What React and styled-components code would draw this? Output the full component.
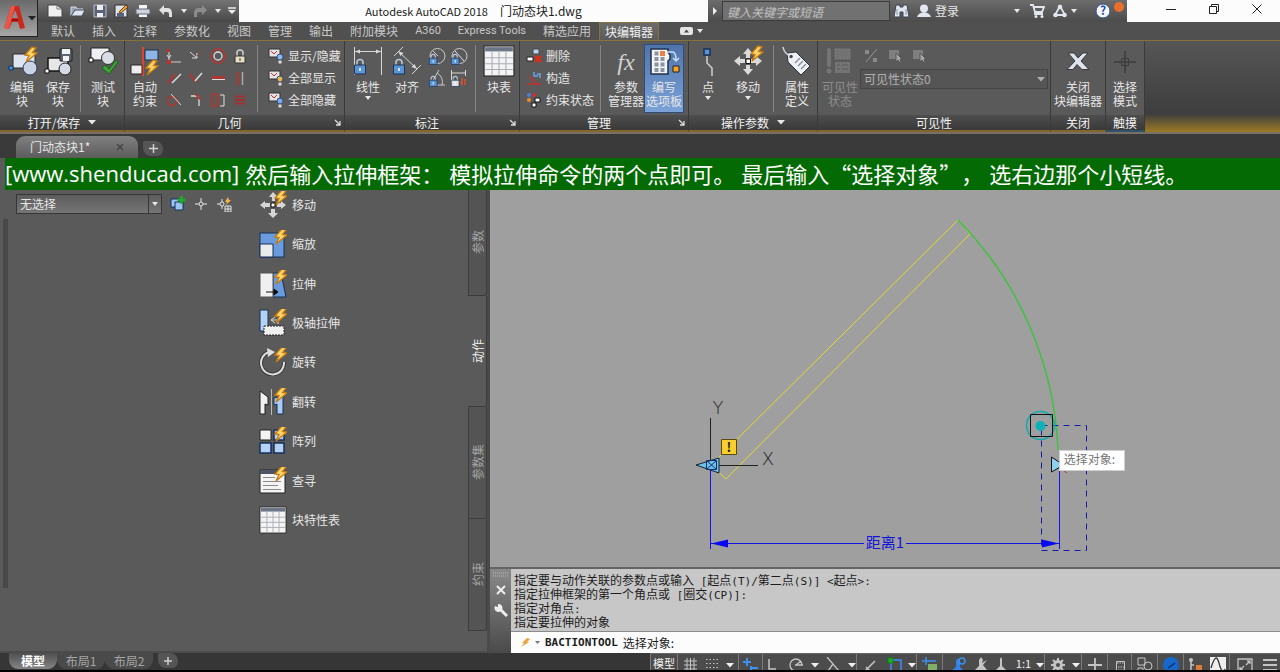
import React, { useState } from "react";
import styled, { createGlobalStyle, css } from "styled-components";

const GlobalStyle = createGlobalStyle`
  * {
    box-sizing: border-box;
  }
  body {
    margin: 0;
    background: #000;
    color: #e6e6e6;
    font-family: "Noto Sans CJK SC", "Noto Sans", sans-serif;
    font-size: 12px;
    line-height: 14px;
  }
  button, input, select {
    font: inherit;
    color: inherit;
    margin: 0;
    padding: 0;
    border: 0;
    background: none;
    border-radius: 0;
  }
  svg {
    display: block;
    flex: none;
  }
`;

/* ---------- icons ---------- */

const Icon = ({ w = 32, h = w, children }) => (
  <svg width={w} height={h} viewBox={`0 0 ${w} ${h}`} fill="none" aria-hidden="true">
    {children}
  </svg>
);

const Bolt = ({ x = 0, y = 0 }) => (
  <path
    transform={`translate(${x} ${y})`}
    d="M8 0 L1 8 L5 8.5 L2 15 L13 6 L8.5 5.5 L12 1 Z"
    fill="#ffd56a"
    stroke="#c47a12"
    strokeWidth="1.3"
  />
);

const Arrow = () => (
  <Icon w={8} h={5}>
    <path d="M0 0h8L4 4.5z" fill="#e8e8e8" />
  </Icon>
);

const TinyArrow = () => (
  <Icon w={6} h={4}>
    <path d="M0 0h6L3 4z" fill="#e8e8e8" />
  </Icon>
);

const EditBlockIcon = () => (
  <Icon>
    <path d="M7 9h22v14H7z" fill="#dfe5f0" stroke="#2b2b2b" />
    <circle cx="24" cy="23" r="7" fill="#c9d3e6" stroke="#2f3a52" />
    <path d="M3 21h4v4H3z" fill="#4a90d9" stroke="#12335c" />
    <Bolt x={18} y={2} />
  </Icon>
);

const SaveBlockIcon = () => (
  <Icon>
    <path d="M6 13h20v13H6z" fill="#e6e6e6" stroke="#151515" strokeWidth="1.5" />
    <circle cx="23" cy="24" r="6" fill="#d5dae4" stroke="#222" />
    <path d="M18 4h12v12H18z" fill="#5c6470" stroke="#222" />
    <path d="M20 4h8v5h-8zM21 11h6v5h-6z" fill="#f2f2f2" />
    <path d="M3 24h4v4H3z" fill="#fff" stroke="#111" />
  </Icon>
);

const TestBlockIcon = () => (
  <Icon>
    <path d="M4 3h18v12H4z" fill="#eef0f4" stroke="#222" />
    <circle cx="21" cy="13" r="6.5" fill="#d8dce4" stroke="#333" />
    <path d="M2 13h4v4H2z" fill="#fff" stroke="#111" />
    <path d="M15 23l3-3 4 4 7-9 2 2-9 12z" fill="#3fa33a" stroke="#1b5f1b" />
  </Icon>
);

const AutoConstrainIcon = () => (
  <Icon>
    <path d="M14 2v29" stroke="#e0442c" strokeWidth="2" />
    <path d="M16 5h13v10H16z" fill="#8fb4e6" stroke="#1d2f4c" />
    <path d="M2 20h11v9H2z" fill="#eeeeee" stroke="#222" />
    <Bolt x={16} y={15} />
  </Icon>
);

const Lock = ({ x, y, s = 1, fill = "#5a93d6" }) => (
  <g transform={`translate(${x} ${y}) scale(${s})`}>
    <path d="M3 6V3.5a3 3 0 0 1 6 0V6" stroke="#b8c6da" strokeWidth="1.6" />
    <path d="M0.5 6h11v9H0.5z" fill={fill} stroke="#1d3557" />
    <path d="M6 9v3" stroke="#fff" strokeWidth="1.5" />
  </g>
);

const LinearIcon = () => (
  <Icon>
    <path d="M2.5 2v28M29.5 2v28M3 6.5h26" stroke="#d6d6d6" />
    <path d="M3 6.5l5-2v4zM29 6.5l-5-2v4z" fill="#d6d6d6" />
    <Lock x={2} y={14} />
  </Icon>
);

const AlignedIcon = () => (
  <Icon>
    <path d="M3 11l9-9M21 29l9-9M7 6l19 18" stroke="#d6d6d6" />
    <path d="M7 6l5.5 2-3 3zM26 24l-5.5-2 3-3z" fill="#d6d6d6" />
    <Lock x={2} y={14} />
  </Icon>
);

const SmallDim = ({ kind }) => (
  <Icon w={18}>
    {kind === "radius" && (
      <>
        <circle cx="9.5" cy="9" r="7.5" stroke="#c9c9c9" />
        <path d="M10 9L5 4" stroke="#c9c9c9" />
      </>
    )}
    {kind === "diameter" && (
      <>
        <circle cx="9.5" cy="9" r="7.5" stroke="#c9c9c9" />
        <path d="M5 4l9 10" stroke="#e4e4e4" />
      </>
    )}
    {kind === "angle" && <path d="M3 15L11 1M3 16h14M9 4a10 10 0 0 1 5 12" stroke="#c9c9c9" />}
    {kind === "convert" && (
      <>
        <path d="M1.5 1v14M15.5 1v6M2 4h13" stroke="#d6d6d6" />
        <path d="M12 9v6l-2-2M15 16v-6" stroke="#d9502c" strokeWidth="1.5" />
      </>
    )}
    <Lock x={1} y={7} s={0.7} fill={kind === "convert" ? "#e0e0e0" : "#5a93d6"} />
  </Icon>
);

const TableIcon = ({ w = 30 }) => (
  <svg width={w} height={w} viewBox="0 0 30 30" fill="none" aria-hidden="true">
    <path d="M1 1h28v28H1z" fill="#f4f4f4" stroke="#222" />
    <path d="M2 2h26v4H2z" fill="#6d7686" />
    <path d="M2 12h26M2 17.5h26M2 23h26M8.5 6v22M15 6v22M21.5 6v22" stroke="#a9adb5" />
  </svg>
);

const PaletteIcon = () => (
  <Icon>
    <path d="M3 4h17v3l2 3v4l-2 2v13H3z" fill="#f4f4f4" stroke="#20304d" strokeWidth="1.5" />
    {[0, 1, 2, 3].map((r) =>
      [0, 1].map((c) => (
        <path key={`${r}${c}`} d={`M${6.5 + c * 6} ${6.5 + r * 5.5}h4v4h-4z`} fill="#8a93a3" />
      ))
    )}
    <path d="M12 6h5v5h-5z" fill="#e8824a" />
    <path d="M19 7h6q3 1 3 8M25 13l3 3 3-3" stroke="#c9dcf7" strokeWidth="1.5" />
    <path d="M25 21h6v6h-6z" fill="#f5a623" stroke="#222" />
  </Icon>
);

const PointIcon = () => (
  <Icon>
    <path d="M12 4h6v6h-6z" fill="#5a93d6" stroke="#16325a" strokeWidth="1.5" />
    <path d="M15 11v7l5 5v8" stroke="#d0d0d0" strokeWidth="1.5" />
  </Icon>
);

const MoveIcon = () => (
  <Icon>
    <path d="M16 3l-5 6h3v4h4V9h3zM16 30l-5-6h3v-4h4v4h3zM2 16l6-5v3h5v4H8v3zM30 16l-6-5v3h-5v4h5v3z" fill="#dadada" />
    <path d="M14 14h4.5v4.5H14z" fill="#fff" stroke="#111" />
    <Bolt x={18} y={1} />
  </Icon>
);

const TagIcon = () => (
  <Icon>
    <path d="M6 8l9-1 14 14-9 9L7 17z" fill="#eef0f4" stroke="#2c3140" />
    <circle cx="10" cy="11.5" r="1.8" fill="#444" />
    <path d="M9 11Q3 8 2 2" stroke="#d6d6d6" strokeWidth="1.5" />
    <path d="M14 18l5-5M17 21l5-5M20 24l5-5" stroke="#8a90a0" strokeWidth="1.5" />
  </Icon>
);

const VisibilityIcon = () => (
  <Icon>
    <path d="M5 5v15" stroke="#a5a5a5" strokeWidth="4" strokeLinecap="round" />
    <circle cx="5" cy="26" r="2.5" fill="#a5a5a5" />
    <path d="M11 4h15v10H11z" fill="#a0a0a0" stroke="#c4c4c4" strokeDasharray="2 1" />
    <path d="M11 17h15v11H11z" fill="#a5a5a5" />
    <path d="M13 20h3M18 20h6M13 24h3M18 24h6" stroke="#5a5a5a" />
  </Icon>
);

const CloseIcon = () => (
  <Icon>
    <path d="M6 8h6l4 5 5-5h5l-7 8 8 8.5h-7l-5-5-4 5H5l8-8.500z" fill="#dfe3ea" stroke="#33383f" />
  </Icon>
);

const TouchIcon = () => (
  <Icon>
    <path d="M16 6v22M5 17h22" stroke="#3c3c3c" strokeWidth="1.5" />
    <path d="M12.5 13.5h7v7h-7z" stroke="#3c3c3c" />
  </Icon>
);

const geoPaths = [
  <><path d="M3 1v12" stroke="#ddd" /><path d="M1 7l2 3 2-3" stroke="#ddd" /><path d="M4 14h11" stroke="#ccc" /><path d="M1 1h3v3H1zM1 12h4v4H1z" fill="#b8322c" /></>,
  <><path d="M2 4l7 6M9 5v5H4" stroke="#ddd" /><path d="M9 8l6-7" stroke="#a33" strokeDasharray="2 1" /></>,
  <><circle cx="8" cy="8" r="7" stroke="#b8322c" strokeWidth="1.5" /><circle cx="8" cy="8" r="4" stroke="#ddd" strokeWidth="1.3" /></>,
  <><path d="M5 8V5a3 3 0 0 1 6 0v3" stroke="#cfcfcf" strokeWidth="1.5" /><path d="M3 8h10v7H3z" fill="#e6dfc5" stroke="#333" /><path d="M8 10v3" stroke="#333" /></>,
  <><path d="M2 13L9 4" stroke="#b8322c" strokeWidth="2" /><path d="M6 13l9-9" stroke="#ddd" strokeWidth="1.5" /></>,
  <><path d="M2 4l6 8" stroke="#b8322c" strokeWidth="2" /><path d="M7 11l7-8" stroke="#ddd" strokeWidth="1.5" /></>,
  <><path d="M2 7.5h13" stroke="#b8322c" strokeWidth="2.5" /><path d="M2 9.5h13" stroke="#ddd" /></>,
  <><path d="M6 2v13" stroke="#b8322c" strokeWidth="2" /><path d="M10.5 2v13" stroke="#aaa" strokeWidth="1.5" /></>,
  <><circle cx="6" cy="9" r="4.5" stroke="#b8322c" strokeWidth="1.5" /><path d="M5 2l10 11" stroke="#ddd" /></>,
  <><path d="M3 4h5q3 0 3 4v6" stroke="#ddd" strokeWidth="1.3" /><path d="M7 2l6 6M10 3v4" stroke="#b8322c" strokeWidth="1.5" /></>,
  <><path d="M2 2h4M2 2v12h4M8 1v14" stroke="#b8322c" strokeWidth="1.5" /><path d="M10 3h4v11h-4" stroke="#ddd" /></>,
  <><path d="M3 4.5h10M3 8h10M3 11.5h10" stroke="#a3302c" strokeWidth="2" /></>,
];

const ShowIcon = ({ tone }) => (
  <Icon w={16}>
    <path d="M1 1h11v8H1z" fill="#e4e4e4" stroke="#333" />
    <path d="M3 3l3 3M9 3L6 6" stroke="#c8322c" />
    <circle cx="12" cy="9" r="3" fill={tone} stroke="#33507a" />
    <path d="M10.5 12.5h3v3h-3z" fill="#ddd" />
  </Icon>
);

const DeleteIcon = () => (
  <Icon w={16}>
    <path d="M7 1h6v5H7z" fill="#bcd2f0" stroke="#444" />
    <path d="M1 9h6v4H1z" fill="#fff" stroke="#222" />
    <path d="M9 8l6 6M15 8l-6 6" stroke="#e02a18" strokeWidth="2.5" />
  </Icon>
);
const ConstructIcon = () => (
  <Icon w={16}>
    <path d="M1 14h14M3 6l8 8" stroke="#c8322c" strokeWidth="1.3" />
    <path d="M8 2v4h4M14 8V4h-3" stroke="#6fa2e8" strokeWidth="1.5" />
  </Icon>
);
const StatusIcon = () => (
  <Icon w={16}>
    <circle cx="3" cy="3" r="2" fill="#4a7fe0" />
    <circle cx="8" cy="3" r="2" fill="#d3302c" />
    <circle cx="3" cy="8" r="2" fill="#f08a24" />
    <path d="M9 6h5v4H9zM6 11h4v4H6z" fill="#fff" stroke="#111" />
  </Icon>
);

const ToolSvg = ({ kind }) => (
  <Icon w={28}>
    {kind === "move" && (
      <>
        <path d="M14 1l-4 5h3v4h3V6h3zM14 27l-5-5h3v-4h4v4h3zM1 14l5-4v2h5v4H6v2zM27 14l-5-4v2h-4v4h4v2z" fill="#d6d6d6" />
        <path d="M12 12h4v4h-4z" fill="#fff" stroke="#111" />
      </>
    )}
    {kind === "scale" && (
      <>
        <path d="M1 3h24v24H1z" fill="#6a9bdc" stroke="#14305c" />
        <path d="M1 14h13v13H1z" fill="#ececec" stroke="#14305c" />
      </>
    )}
    {kind === "stretch" && (
      <>
        <path d="M14 3h8l5 24H14z" fill="#6a9bdc" stroke="#14305c" />
        <path d="M1 3h13v24H1z" fill="#f0f0f0" stroke="#555" />
        <path d="M7 22h11M15 19l4 3-4 3z" stroke="#111" fill="#111" />
      </>
    )}
    {kind === "polar" && (
      <>
        <path d="M1 1h8v21H1z" fill="#b5d1f5" stroke="#14305c" />
        <path d="M5 17h20v9H5z" fill="#f0f0f0" stroke="#222" strokeDasharray="2 1" />
        <path d="M12 11l4-3M12 11l4 3M13 11h6v4" stroke="#d8d8d8" />
      </>
    )}
    {kind === "rotate" && (
      <>
        <path d="M10 4A11.5 11.5 0 1 0 25 14" stroke="#3a3a3a" strokeWidth="4" />
        <path d="M10 4A11.5 11.5 0 1 0 25 14" stroke="#dedede" strokeWidth="2" />
        <path d="M8 0l8 4-7 5z" fill="#dedede" />
      </>
    )}
    {kind === "flip" && (
      <>
        <path d="M1 3l8 6v8l-3-1v10H1z" fill="#f0f0f0" stroke="#222" />
        <path d="M12.5 1v26" stroke="#bbb" />
        <path d="M24 8l-9 2v7l3-1v10h6z" fill="#a9cbf5" stroke="#14305c" />
      </>
    )}
    {kind === "array" && (
      <>
        <path d="M1 3h11v10H1z" fill="#f4f4f4" stroke="#222" />
        <path d="M15 3h10v10H15zM1 16h11v10H1zM15 16h10v10H15z" fill="#b5d1f5" stroke="#14305c" strokeWidth="1.5" />
      </>
    )}
    {kind === "lookup" && (
      <>
        <path d="M1 3h25v23H1z" fill="#f4f4f4" stroke="#222" />
        <path d="M1 3h25v4H1z" fill="#4d5562" />
        <path d="M4 10.5h12M4 14.5h18M4 18.5h15M4 22.5h18" stroke="#8b8b8b" />
      </>
    )}
    <Bolt x={15} y={-1} />
  </Icon>
);

/* ---------- title bar ---------- */

const Page = styled.div`
  min-height: 100vh;
  display: flex;
  flex-direction: column;
  overflow: hidden;
  padding-bottom: 2px;
`;

const Header = styled.header`
  display: grid;
  grid-template-columns: 38px 1fr;
  background: #505050;
`;

const AppButton = styled.button`
  display: flex;
  align-items: center;
  gap: 2px;
  height: 37px;
  padding-left: 4px;
  border-right: 1px solid #222;
  border-bottom: 1px solid #222;
  background: linear-gradient(#6a6a6a, #a6a6a6);
`;

const TitleRow = styled.div`
  display: flex;
  height: 22px;
`;

const QuickAccess = styled.div`
  display: flex;
  align-items: center;
  gap: 7px;
  width: 201px;
  padding-left: 9px;
  background: linear-gradient(#747474, #474747);
`;

const Title = styled.h1`
  flex: 1;
  display: flex;
  align-items: center;
  justify-content: center;
  gap: 12px;
  margin: 0;
  font-size: 12px;
  font-weight: 400;
  color: #222;
  background: #fcfcfc;
`;

const AppName = styled.span`
  font-size: 11px;
`;

const InfoCenter = styled.div`
  display: flex;
  align-items: center;
  flex: none;
  width: 419px;
  background: linear-gradient(#6c6c6c, #4c4c4c);
`;

const Search = styled.input`
  width: 168px;
  height: 20px;
  padding: 0 4px;
  background: #717171;
  border: 1px solid #3c3c3c;
  font-style: italic;
  &::placeholder {
    color: #c2c2c2;
    opacity: 1;
  }
`;

const ExpandButton = styled.button`
  width: 14px;
  padding-left: 5px;
`;

const InfoButton = styled.button`
  display: flex;
  align-items: center;
  flex: none;
  gap: 4px;
  margin-left: ${(p) => p.$gap || 0}px;
  white-space: nowrap;
`;

const WindowButtons = styled.div`
  display: flex;
  justify-content: space-around;
  align-items: center;
  flex: none;
  width: 153px;
  padding: 0 2px 4px 22px;
  background: #fcfcfc;
`;

const MenuRow = styled.nav`
  display: flex;
  height: 18px;
  align-items: stretch;
  padding-left: 4px;
`;

const MenuTab = styled.button`
  padding: 0 8px 0 9px;
  white-space: nowrap;
  color: #c8c8c8;
  ${(p) => p.$latin && css`font-family: Roboto, sans-serif; font-size: 11px;`}
  ${(p) =>
    p.$active &&
    css`
      padding: 0 5px;
      color: #f0f0f0;
      background: linear-gradient(#6b6b6b, #5b5b5b);
      border: 1px solid #857339;
      border-bottom: 0;
    `}
`;

/* ---------- ribbon ---------- */

const Ribbon = styled.section`
  display: flex;
  height: 94px;
  border-top: 1px solid #857339;
  border-bottom: 2px solid #777067;
  background: linear-gradient(#565656, #3e3e3e 80%, #9b7a24);
`;

const Panel = styled.div`
  display: flex;
  flex-direction: column;
  flex: none;
  width: ${(p) => p.$width}px;
  border-right: 1px solid #3a3a3a;
  border-bottom: 2px solid ${(p) => p.$line || "#85662a"};
  background: #5a5a5a;
`;

const PanelBody = styled.div`
  flex: 1;
  display: flex;
  align-items: flex-start;
  padding: 4px 0 0 ${(p) => p.$left || 0}px;
`;

const PanelFooter = styled.div`
  display: flex;
  align-items: center;
  height: 15px;
  background: linear-gradient(#4e4e4e, #393939);
  span {
    flex: 1;
    display: flex;
    align-items: center;
    justify-content: center;
    gap: 8px;
    color: #f2f2f2;
  }
`;

const BigButton = styled.button`
  display: flex;
  flex-direction: column;
  align-items: center;
  flex: none;
  width: ${(p) => p.$width || 36}px;
  height: 67px;
  font-family: "Liberation Sans", "Noto Sans CJK SC", sans-serif;
  white-space: nowrap;
  opacity: ${(p) => (p.$off ? 0.35 : 1)};
  ${(p) =>
    p.$on &&
    css`
      background: linear-gradient(#4f74ab, #7ba3d8);
      outline: 1px solid #2f4c7d;
    `}
  svg {
    margin-bottom: 4px;
  }
  span + svg {
    margin-top: 1px;
  }
`;

const Divider = styled.div`
  width: 1px;
  height: 67px;
  margin: 0 ${(p) => p.$m || 4}px;
  background: #858585;
`;

const IconGrid = styled.div`
  display: grid;
  grid-template-columns: repeat(${(p) => p.$cols}, 22px);
  grid-auto-rows: 22px;
  button {
    display: grid;
    place-items: center;
  }
`;

const List = styled.div`
  display: grid;
  grid-auto-rows: 22px;
  justify-items: start;
  padding-left: ${(p) => p.$left || 5}px;
`;

const ListButton = styled.button`
  display: flex;
  align-items: center;
  gap: 4px;
  white-space: nowrap;
`;

const Fx = styled.i`
  height: 36px;
  font: italic 24px/34px "Liberation Serif", serif;
  color: #d2d2d2;
`;

const VisibilityTools = styled.div`
  flex: 1;
  padding-right: 2px;
  opacity: 0.6;
  div {
    display: flex;
    gap: 8px;
    height: 24px;
    padding: 3px 0 0 3px;
  }
`;

const SelectBox = styled.span`
  display: grid;
  align-items: center;
  height: 20px;
  width: ${(p) => p.$width || "auto"};
  border: 1px solid #373737;
  background: ${(p) => (p.$flat ? "#525252" : "linear-gradient(#5c5c5c, #757575)")};
  select {
    grid-area: 1 / 1;
    width: 100%;
    height: 18px;
    padding: 0 3px;
    appearance: none;
    outline: none;
  }
  i {
    grid-area: 1 / 1;
    justify-self: end;
    display: grid;
    place-items: center;
    width: 13px;
    height: 18px;
    pointer-events: none;
    border-left: 1px solid ${(p) => (p.$flat ? "transparent" : "#373737")};
  }
`;

/* ---------- file tabs and caption ---------- */

const FileTabs = styled.div`
  display: flex;
  align-items: flex-end;
  height: 24px;
  padding-left: 16px;
  background: #3a3a3a;
`;

const FileTab = styled.div`
  display: flex;
  align-items: center;
  justify-content: space-between;
  width: 122px;
  height: 22px;
  padding: 0 14px;
  border-radius: 9px 9px 0 0;
  background: linear-gradient(#808080, #5c5c5c);
`;

const NewTab = styled.button`
  display: grid;
  place-items: center;
  width: 20px;
  height: 15px;
  margin: 0 0 2px 5px;
  border-radius: 2px 8px 6px 8px;
  background: #555;
`;

const CaptionStrip = styled.div`
  padding-left: 5px;
  background: #5a5a5a;
`;

const Caption = styled.p`
  display: flex;
  gap: 6px;
  margin: 0;
  height: 32px;
  background: #046b04;
  color: #fff;
  font: 22px/31px "Noto Sans CJK SC", sans-serif;
  text-spacing-trim: space-all;
  white-space: nowrap;
`;

const Site = styled.span`
  font-family: "Open Sans", sans-serif;
`;

/* ---------- workspace ---------- */

const Workspace = styled.main`
  flex: 1;
  display: grid;
  grid-template-columns: 490px 1fr;
  background: #5a5a5a;
`;

const Palettes = styled.aside`
  display: grid;
  grid-template-columns: 248px 1fr 22px;
  border-bottom: 2px solid #4b4b4b;
`;

const Properties = styled.div`
  display: flex;
  flex-direction: column;
`;

const SelectionRow = styled.div`
  display: flex;
  align-items: center;
  gap: 8px;
  padding: 4px 0 0 16px;
`;

const SideBar = styled.div`
  width: 5px;
  height: 369px;
  margin: 5px 0 0 3px;
  background: #484848;
`;

const ToolList = styled.div`
  display: grid;
  grid-auto-rows: 1fr;
  height: 355px;
  margin-top: -5px;
  padding-left: 11px;
  justify-items: start;
`;

const ToolButton = styled.button`
  display: flex;
  align-items: center;
  gap: 5px;
`;

const SideTabs = styled.div`
  display: flex;
  flex-direction: column;
  border-right: 3px solid #4a4a4a;
`;

const SideTab = styled.button`
  height: ${(p) => p.$height}px;
  display: grid;
  place-items: center;
  border: 1px solid #3c3c3c;
  border-top: 0;
  border-radius: 0 0 3px 0;
  color: #a2a2a2;
  background: #545454;
  ${(p) =>
    p.$active &&
    css`
      color: #f0f0f0;
      background: #5a5a5a;
      border-left-color: transparent;
    `}
  span {
    writing-mode: vertical-rl;
    text-orientation: sideways;
    transform: rotate(180deg);
  }
`;

const Right = styled.div`
  display: flex;
  flex-direction: column;
`;

const Canvas = styled.div`
  position: relative;
  background: #9f9f9f;
  border-bottom: 2px solid #646464;
  svg {
    width: 100%;
    height: auto;
  }
`;

const Tooltip = styled.div`
  position: absolute;
  left: 72%;
  top: 69%;
  width: 66px;
  height: 21px;
  padding: 1px 4px;
  background: #fff;
  border: 1px solid #d0d0d0;
  color: #777;
`;

const CommandWindow = styled.div`
  flex: 1;
  display: grid;
  grid-template-columns: 21px 1fr;
`;

const CommandHandle = styled.div`
  display: flex;
  flex-direction: column;
  align-items: center;
  gap: 8px;
  padding-top: 3px;
  background: linear-gradient(#8a8a8a, #4a4a4a);
`;

const History = styled.div`
  height: 62px;
  padding: 4px 0 0 3px;
  background: #c7c7c7;
  color: #1c1c1c;
  overflow: hidden;
`;

const Line = styled.div`
  height: 14px;
  white-space: pre;
`;

const Mono = styled.span`
  font-family: "DejaVu Sans Mono", monospace;
  font-size: 11px;
  line-height: 12px;
`;

const Prompt = styled.label`
  display: flex;
  align-items: center;
  gap: 5px;
  height: 22px;
  padding-left: 10px;
  border-top: 1px solid #8a8a8a;
  background: #fcfcfc;
  color: #1c1c1c;
  ${Mono} {
    font-weight: 700;
  }
  input {
    flex: 1;
    outline: none;
  }
`;

/* ---------- bottom bar ---------- */

const BottomBar = styled.footer`
  display: flex;
  height: 17px;
  overflow: hidden;
  background: #363636;
`;

const LayoutTabs = styled.div`
  flex: 1;
  display: flex;
  padding-left: 9px;
`;

const LayoutTab = styled.button`
  width: 48px;
  height: 16px;
  border-radius: 0 0 9px 9px;
  background: ${(p) => (p.$active ? "linear-gradient(#4f4f4f, #858585)" : "#4a4a4a")};
  color: ${(p) => (p.$active ? "#fff" : "#a6a6a6")};
  font-weight: ${(p) => (p.$active ? 700 : 400)};
`;

const StatusTray = styled.div`
  display: flex;
  background: #4c4c4c;
  border-top: 1px solid #666;
`;

const StatusCell = styled.button`
  display: flex;
  justify-content: center;
  width: ${(p) => p.$width}px;
  padding-top: 3px;
  border-left: 1px solid ${(p) => (p.$sep ? "#7a7a7a" : "transparent")};
  font-size: 11px;
  line-height: 13px;
  white-space: nowrap;
  color: #f0f0f0;
`;

const menus = [
  "默认", "插入", "注释", "参数化", "视图", "管理", "输出", "附加模块",
  "A360", "Express Tools", "精选应用", "块编辑器",
];

const tools = [
  ["move", "移动"],
  ["scale", "缩放"],
  ["stretch", "拉伸"],
  ["polar", "极轴拉伸"],
  ["rotate", "旋转"],
  ["flip", "翻转"],
  ["array", "阵列"],
  ["lookup", "查寻"],
  ["table", "块特性表"],
];

const sideTabs = [["参数", 106], ["动作", 111], ["参数集", 112], ["约束", 112]];

const historyLines = [
  "指定要与动作关联的参数点或输入 [起点(T)/第二点(S)] <起点>:",
  "指定拉伸框架的第一个角点或 [圈交(CP)]:",
  "指定对角点:",
  "指定要拉伸的对象",
];

const g = "#c4c4c4";
const b = "#3d8ff0";
const down = <path d="M4 6h8l-4 4.5z" fill="#f0f0f0" />;
const statusItems = [
  { id: "grid", w: 24, sep: true, d: <path d="M5 1v14M8.5 1v14M12 1v14M2 4h13M2 8h13M2 12h13" stroke={g} /> },
  { id: "snap", w: 20, d: <path d="M2 2.5h13M2 6.5h13M2 10.5h13" stroke={g} strokeDasharray="1.5 2" /> },
  { id: "snap menu", w: 17, d: down },
  { id: "infer", w: 24, sep: true, d: <path d="M4 1v8M0 5h8M8 11h7M8 9v4" stroke={b} strokeWidth="2" /> },
  { id: "ortho", w: 20, sep: true, d: <path d="M4 2v10h7" stroke={g} strokeWidth="1.5" /> },
  { id: "polar", w: 27, d: <path d="M14 8A6 6 0 1 0 8 14M7 8h8M8 8l5-4" stroke={g} strokeWidth="1.3" /> },
  { id: "polar menu", w: 10, d: down },
  { id: "iso", w: 27, d: <path d="M2 0l12 14M8 7l-5 7" stroke={g} strokeWidth="1.3" /> },
  { id: "iso menu", w: 10, d: down },
  { id: "track", w: 26, sep: true, d: <path d="M3 14L13 4M4 10l4 4" stroke={g} strokeWidth="1.5" /> },
  { id: "osnap", w: 24, d: <><path d="M4 3h10v12H4z" stroke={b} strokeWidth="1.5" /><path d="M1 1h5v5H1z" fill="#2ca52c" stroke="#081" /></> },
  { id: "osnap menu", w: 10, d: down },
  { id: "lineweight", w: 26, sep: true, d: <><path d="M4 0v8M0 4h14" stroke={b} strokeWidth="1.5" /><path d="M6 7h9v7H6z" fill="#7fae68" /></> },
  { id: "annotation", w: 30, sep: true, d: <><path d="M1 14l5-4V4l2-3 2 3v6l4 4z" fill="#2f84ee" /><circle cx="12" cy="4" r="3" stroke={b} strokeWidth="1.5" /></> },
  { id: "auto scale", w: 17, d: <path d="M2 13l4-4V3l2-3 2 3-1 3 5-3-4 5 4 5z" fill={g} /> },
  { id: "scale", w: 23, d: <path d="M3 13l4-4V2l1-2 1 2v7l4 4z" fill={g} /> },
  { id: "ratio", w: 22, text: "1:1" },
  { id: "ratio menu", w: 10, d: down },
  { id: "gear", w: 26, sep: true, d: <><circle cx="8" cy="8" r="3.5" stroke={g} strokeWidth="3" /><path d="M8 1v3M8 12v3M1 8h3M12 8h3M3 3l2 2M13 3l-2 2M3 13l2-2M13 13l-2-2" stroke={g} strokeWidth="2" /></> },
  { id: "gear menu", w: 11, d: down },
  { id: "plus", w: 26, sep: true, d: <path d="M8 1v14M1 8h14" stroke={g} strokeWidth="1.8" /> },
  { id: "calc", w: 24, sep: true, d: <><path d="M4.5 4.5h8v12h-8z" stroke={g} /><path d="M5 6h7M6 10h6M6 13h6" stroke={g} strokeDasharray="1.5 1" /></> },
  { id: "isolate", w: 26, sep: true, d: <><path d="M1 1h7v7H1z" stroke={g} /><circle cx="11" cy="9" r="4" stroke={g} /><path d="M1 11h5v4H1z" stroke={g} /></> },
  { id: "hardware", w: 26, sep: true, d: <><circle cx="8" cy="8" r="8" fill="#1667c9" /><path d="M5 11l7-5" stroke="#0c2f6b" strokeWidth="1.5" /></> },
  { id: "trusted", w: 22, sep: true, d: <><circle cx="4" cy="3" r="2" fill={g} /><path d="M4 4v10M4 8h3" stroke={g} strokeWidth="1.5" /><path d="M9 8h6v6H9z" fill="#e07b33" /></> },
  { id: "chart", w: 24, d: <><path d="M0 0h16v14H0z" fill="#eee" /><path d="M1 11Q6-6 9 6t6 6" stroke="#333" strokeWidth="1.3" /></> },
  { id: "clean", w: 30, sep: true, d: <path d="M1 2h14v12H1zM9 8l4-4M10 4h3v3M7 9l-4 4M3 10v3h3" stroke={g} strokeWidth="1.3" /> },
  { id: "customize", w: 21, d: <path d="M1 3h14M1 8h14M1 13h14" stroke={g} strokeWidth="1.8" /> },
];

const CommandText = ({ text }) => (
  <Line>
    {text
      .split(/([\x20-\x7e]+)/)
      .map((part, i) => (i % 2 ? <Mono key={i}>{part}</Mono> : part))}
  </Line>
);

const Launcher = () => (
  <Icon w={10} h={8}>
    <path d="M1 1l5 5M6 2v4H2" stroke="#ddd" strokeWidth="1.3" />
  </Icon>
);

const RibbonPanel = ({ width, left, label, more, launcher, line, children }) => (
  <Panel $width={width} $line={line}>
    <PanelBody $left={left}>{children}</PanelBody>
    <PanelFooter>
      <span>
        {label}
        {more && <Arrow />}
      </span>
      {launcher && <Launcher />}
    </PanelFooter>
  </Panel>
);

const Big = ({ icon, lines, menu, ...rest }) => (
  <BigButton {...rest}>
    {icon}
    {lines.map((l) => (
      <span key={l}>{l}</span>
    ))}
    {menu && <TinyArrow />}
  </BigButton>
);

const TitleBar = () => (
  <TitleRow>
    <QuickAccess>
      <Icon w={16} h={14}><path d="M1 1h9l5 4v8H1z" fill="#f0f0f0" stroke="#444" /><path d="M10 1v4h5" stroke="#777" /></Icon>
      <Icon w={16} h={14}><path d="M1 12V3h5l1 2h6v3" fill="#96a3b8" stroke="#d8dee8" /><path d="M1 12l4-6h10l-3 6z" fill="#dfe5ef" stroke="#445" /></Icon>
      <Icon w={14}><path d="M1 1h12v12H1z" fill="#59627a" stroke="#b9c0ce" /><path d="M4 1h6v5H4zM4 9h6v4H4z" fill="#eee" /></Icon>
      <Icon w={14}><path d="M1 1h12v12H1z" fill="#dde1e8" stroke="#333" /><path d="M3 9h7v4H3z" fill="#59627a" /><path d="M5 8l7-7 2 2-7 6z" fill="#f2a33a" stroke="#6b4310" /></Icon>
      <Icon w={16} h={14}><path d="M4 1h8v4H4zM4 9h8v4H4z" fill="#f4f4f4" /><path d="M1 5h14v5H1z" fill="#cfd4dc" stroke="#667" /></Icon>
      <Icon w={16} h={12}><path d="M1 5l5-5v3h4q4 0 4 6v3h-3V9q0-2-2-2H6v3z" fill="#e2e2e2" /></Icon>
      <TinyArrow />
      <Icon w={14} h={12}><path d="M13 5L8 0v3H4Q0 3 0 9v3h3V9q0-2 2-2h3v3z" fill="#8c8c8c" /></Icon>
      <TinyArrow />
      <Icon w={8} h={8}><path d="M0 1h8" stroke="#eee" strokeWidth="1.5" /><path d="M0 3h8L4 7z" fill="#eee" /></Icon>
    </QuickAccess>
    <Title>
      <AppName>Autodesk AutoCAD 2018</AppName>
      <span>门动态块1.dwg</span>
    </Title>
    <InfoCenter>
      <ExpandButton aria-label="expand"><Icon w={4} h={8}><path d="M0 0l4 4-4 4z" fill="#eee" /></Icon></ExpandButton>
      <Search placeholder="键入关键字或短语" aria-label="搜索" />
      <InfoButton $gap={4} aria-label="find"><Icon w={15} h={14}><path d="M2 1h4v2h3V1h4l2 12h-6V8H6v5H0z" fill="#e2e6ee" stroke="#3b4152" /><path d="M3 5v6M12 5v6" stroke="#8a92a6" /></Icon></InfoButton>
      <InfoButton $gap={8}>
        <Icon w={14}><circle cx="7" cy="4.5" r="4" fill="#e2e6ee" /><path d="M0 13q1-4 7-5 6 1 7 5z" fill="#e2e6ee" /></Icon>
        登录
      </InfoButton>
      <InfoButton $gap={55} aria-label="account"><TinyArrow /></InfoButton>
      <InfoButton $gap={10} aria-label="store"><Icon w={15} h={14}><path d="M0 1h3l2 7h7l2-5H4M5 8v2h8" stroke="#e2e6ee" strokeWidth="1.8" /><circle cx="6" cy="12.5" r="1.5" fill="#e2e6ee" /><circle cx="12" cy="12.5" r="1.5" fill="#e2e6ee" /></Icon></InfoButton>
      <InfoButton $gap={8} aria-label="A360">
        <Icon w={14}><path d="M7 2L2 11h10z" stroke="#e2e6ee" strokeWidth="1.8" /><circle cx="7" cy="3" r="2.3" fill="#e2e6ee" /><circle cx="2.5" cy="11" r="2.3" fill="#e2e6ee" /><circle cx="11.5" cy="11" r="2.3" fill="#e2e6ee" /></Icon>
        <TinyArrow />
      </InfoButton>
      <InfoButton $gap={18} aria-label="help">
        <Icon w={30} h={20}><circle cx="8" cy="10" r="7" fill="#f4f6fa" stroke="#2f4f8a" /><text x="8" y="14" textAnchor="middle" fontSize="12" fontWeight="700" fill="#24509c">?</text><circle cx="24" cy="6" r="5" fill="#e8702a" /></Icon>
      </InfoButton>
    </InfoCenter>
    <WindowButtons>
      <button aria-label="minimize"><Icon w={10}><path d="M0 5.5h10" stroke="#222" /></Icon></button>
      <button aria-label="restore"><Icon w={10}><path d="M0.5 2.5h7v7h-7zM2.5 2V0.5h7v7H8" stroke="#222" /></Icon></button>
      <button aria-label="close"><Icon w={10}><path d="M0.5 0.5l9 9M9.5 0.5l-9 9" stroke="#222" /></Icon></button>
    </WindowButtons>
  </TitleRow>
);

const Drawing = () => (
  <svg viewBox="490 190 790 377" fill="none" role="img" aria-label="drawing">
    <path d="M711 465L958 220l12 14-244 245z" stroke="#e2da2e" />
    <path d="M958 220A348 348 0 0 1 1058 450" stroke="#3fc23f" strokeWidth="1.5" />
    <path d="M710.5 418v47M718 465.5h40" stroke="#222" />
    <path d="M710.5 465v84M1059.5 468v81M711 543.5h153M906 543.5h153" stroke="#1414e6" />
    <path d="M711 543.5l17-4v8zM1059 543.5l-17-4v8z" fill="#0a0af0" />
    <path d="M1041.5 425.5h45v125h-45z" stroke="#1a1aa8" strokeDasharray="6 5" />
    <circle cx="1040.5" cy="425.5" r="14" stroke="#18a8a8" strokeWidth="1.5" />
    <circle cx="1040.5" cy="426" r="5" fill="#10b0b8" />
    <path d="M1030.5 414.5h22v22h-22z" stroke="#111" />
    <path d="M696 465l23-7v15z" fill="#6cc0ea" stroke="#123" />
    <path d="M706.5 460.5h10v9h-10zM707 461l9 8M716 461l-9 8" stroke="#15306a" />
    <path d="M1051.5 457v15l12-7z" fill="#8fd0f0" stroke="#111" />
    <path d="M1063 470l4 3" stroke="#c8322c" />
    <path d="M721.5 439.5h15v15h-15z" fill="#f8cf2c" stroke="#5d4a0c" />
    <text x="729" y="452" textAnchor="middle" fontSize="13" fontWeight="700" fill="#222">!</text>
    <g fontFamily="DejaVu Sans Light, DejaVu Sans" fontSize="18" fontWeight="200" textAnchor="middle" fill="#222">
      <text x="718" y="414">Y</text>
      <text x="768" y="465">X</text>
    </g>
    <text x="885" y="548" textAnchor="middle" fontSize="15" fill="#1414d8">距离1</text>
  </svg>
);

const App = () => {
  const [activeMenu, setActiveMenu] = useState("块编辑器");
  const [activeSide, setActiveSide] = useState("动作");

  return (
    <Page lang="zh-CN">
      <GlobalStyle />
      <Header>
        <AppButton aria-label="application menu">
          <Icon w={22} h={26}>
            <path d="M7 1h8l6 22-5 1-2-7H8l-3 7-5-1z" fill="#c9281f" />
            <path d="M11 5l3 8H8z" fill="#8d8d8d" />
            <path d="M7 1h4L5 24l-5-1z" fill="#e8564a" />
            <path d="M8 14h6v2H7z" fill="#8f1710" />
          </Icon>
          <Icon w={8} h={5}><path d="M0 0h8L4 4.5z" fill="#222" /></Icon>
        </AppButton>
        <div>
          <TitleBar />
          <MenuRow>
            {menus.map((m) => (
              <MenuTab
                key={m}
                $active={m === activeMenu}
                $latin={/^[A-Z]/.test(m)}
                onClick={() => setActiveMenu(m)}
              >
                {m}
              </MenuTab>
            ))}
            <InfoButton $gap={21} aria-label="minimize ribbon">
              <Icon w={13} h={8}><rect width="13" height="8" rx="2" fill="#e4e4e4" /><path d="M4 5.5h5L6.5 2.5z" fill="#444" /></Icon>
              <TinyArrow />
            </InfoButton>
          </MenuRow>
        </div>
      </Header>

      <Ribbon>
        <RibbonPanel width={125} left={4} label="打开/保存" more>
          <Big icon={<EditBlockIcon />} lines={["编辑", "块"]} />
          <Big icon={<SaveBlockIcon />} lines={["保存", "块"]} />
          <Divider />
          <Big icon={<TestBlockIcon />} lines={["测试", "块"]} />
        </RibbonPanel>
        <RibbonPanel width={220} left={2} label="几何" launcher>
          <Big icon={<AutoConstrainIcon />} lines={["自动", "约束"]} />
          <IconGrid $cols={4}>
            {geoPaths.map((p, i) => (
              <button key={i} aria-label={`constraint ${i + 1}`}>
                <Icon w={16}>{p}</Icon>
              </button>
            ))}
          </IconGrid>
          <Divider $m={6} />
          <List $left={4}>
            <ListButton><ShowIcon tone="#8fb8ee" />显示/隐藏</ListButton>
            <ListButton><ShowIcon tone="#f0b24a" />全部显示</ListButton>
            <ListButton><ShowIcon tone="#7aa9ea" />全部隐藏</ListButton>
          </List>
        </RibbonPanel>
        <RibbonPanel width={175} left={3} label="标注" launcher>
          <Big $width={40} icon={<LinearIcon />} lines={["线性"]} menu />
          <Big $width={38} icon={<AlignedIcon />} lines={["对齐"]} />
          <IconGrid $cols={2}>
            {["radius", "diameter", "angle", "convert"].map((k) => (
              <button key={k} aria-label={k}><SmallDim kind={k} /></button>
            ))}
          </IconGrid>
          <Divider $m={5} />
          <Big icon={<TableIcon w={32} />} lines={["块表"]} />
        </RibbonPanel>
        <RibbonPanel width={169} left={1} label="管理" launcher>
          <List>
            <ListButton><DeleteIcon />删除</ListButton>
            <ListButton><ConstructIcon />构造</ListButton>
            <ListButton><StatusIcon />约束状态</ListButton>
          </List>
          <Divider $m={6} />
          <Big $width={38} icon={<Fx>fx</Fx>} lines={["参数", "管理器"]} />
          <Big $width={38} icon={<PaletteIcon />} lines={["编写", "选项板"]} $on />
        </RibbonPanel>
        <RibbonPanel width={129} label="操作参数" more>
          <Big $width={38} icon={<PointIcon />} lines={["点"]} menu />
          <Big $width={42} icon={<MoveIcon />} lines={["移动"]} menu />
          <Divider />
          <Big $width={38} icon={<TagIcon />} lines={["属性", "定义"]} />
        </RibbonPanel>
        <RibbonPanel width={233} left={2} label="可见性">
          <Big $width={40} icon={<VisibilityIcon />} lines={["可见性", "状态"]} $off />
          <VisibilityTools>
            <div>
              <Icon w={16}><path d="M3 14L14 1" stroke="#bbb" /><path d="M2 2h4v4H2zM10 10h4v4h-4z" fill="#aaa" /></Icon>
              <Icon w={16}><path d="M2 2h10v9H2z" fill="#999" /><path d="M9 5v9l2-2 2 3 1-1-1-3h2z" fill="#ddd" stroke="#555" /></Icon>
              <Icon w={16}><path d="M2 2h10v9H2z" fill="#999" /><path d="M9 5v9l2-2 2 3 1-1-1-3h2z" fill="#ddd" stroke="#555" /></Icon>
            </div>
            <SelectBox $flat>
              <select aria-label="可见性状态"><option>可见性状态0</option></select>
              <i><Arrow /></i>
            </SelectBox>
          </VisibilityTools>
        </RibbonPanel>
        <RibbonPanel width={55} left={2} label="关闭">
          <Big $width={50} icon={<CloseIcon />} lines={["关闭", "块编辑器"]} />
        </RibbonPanel>
        <RibbonPanel width={39} left={1} label="触摸" line="#31506b">
          <Big icon={<TouchIcon />} lines={["选择", "模式"]} />
        </RibbonPanel>
      </Ribbon>

      <FileTabs>
        <FileTab>
          门动态块1*
          <button aria-label="close tab"><Icon w={8}><path d="M1 1l6 6M7 1L1 7" stroke="#444" strokeWidth="1.5" /></Icon></button>
        </FileTab>
        <NewTab aria-label="new drawing"><Icon w={9}><path d="M4.5 0v9M0 4.5h9" stroke="#d0d0d0" strokeWidth="1.5" /></Icon></NewTab>
      </FileTabs>

      <CaptionStrip>
        <Caption>
          <Site>[www.shenducad.com]</Site>
          <span>然后输入拉伸框架：</span>
          <span>模拟拉伸命令的两个点即可。</span>
          <span>最后输入“选择对象”，</span>
          <span>选右边那个小短线。</span>
        </Caption>
      </CaptionStrip>

      <Workspace>
        <Palettes>
          <Properties>
            <SelectionRow>
              <SelectBox $width="146px">
                <select aria-label="选择"><option>无选择</option></select>
                <i><TinyArrow /></i>
              </SelectBox>
              <Icon w={16}><path d="M1 3h8v8H1z" fill="#9dc3f2" stroke="#14305c" /><path d="M5 6h8v8H5z" fill="#9dc3f2" stroke="#14305c" /><path d="M11.5 0v8M7.5 4h8" stroke="#1fae2a" strokeWidth="2.5" /></Icon>
              <Icon w={14}><path d="M7 1v4M7 9v4M1 7h4M9 7h4" stroke="#e6e6e6" /><circle cx="7" cy="7" r="2" stroke="#e6e6e6" /></Icon>
              <Icon w={16}><path d="M6 3v3M6 10v3M1 8h3" stroke="#e6e6e6" /><circle cx="6" cy="8" r="2" stroke="#e6e6e6" /><path d="M12 1L9 6h2l-1 3 5-5h-2z" fill="#f7b64a" /><path d="M9 10h6v6H9zM12 10v6M9 13h6" stroke="#e6e6e6" /></Icon>
            </SelectionRow>
            <SideBar />
          </Properties>
          <ToolList>
            {tools.map(([kind, label]) => (
              <ToolButton key={kind}>
                {kind === "table" ? <TableIcon w={28} /> : <ToolSvg kind={kind} />}
                {label}
              </ToolButton>
            ))}
          </ToolList>
          <SideTabs>
            {sideTabs.map(([label, height]) => (
              <SideTab
                key={label}
                $height={height}
                $active={label === activeSide}
                onClick={() => setActiveSide(label)}
              >
                <span>{label}</span>
              </SideTab>
            ))}
          </SideTabs>
        </Palettes>

        <Right>
          <Canvas>
            <Drawing />
            <Tooltip>选择对象:</Tooltip>
          </Canvas>
          <CommandWindow>
            <CommandHandle>
              <Icon w={15} h={5}><path d="M0 1h15M0 4h15" stroke="#bbb" strokeDasharray="1 1" /></Icon>
              <Icon w={10}><path d="M1 1l8 8M9 1L1 9" stroke="#eee" strokeWidth="2" /></Icon>
              <Icon w={14}><path d="M5 5l8 8" stroke="#eee" strokeWidth="3" /><path d="M1 3a4 4 0 1 0 3-2v3z" fill="#eee" /></Icon>
            </CommandHandle>
            <div>
              <History>
                {historyLines.map((l) => (
                  <CommandText key={l} text={l} />
                ))}
              </History>
              <Prompt>
                <Icon w={9} h={10}><path d="M6 0L1 5h2L0 9l8-5H6l3-3z" fill="#eba13c" /></Icon>
                <Icon w={5} h={4}><path d="M0 0h5L2.5 3z" fill="#777" /></Icon>
                <Mono>BACTIONTOOL</Mono>
                选择对象:
                <input aria-label="命令" />
              </Prompt>
            </div>
          </CommandWindow>
        </Right>
      </Workspace>

      <BottomBar>
        <LayoutTabs>
          <LayoutTab $active>模型</LayoutTab>
          <LayoutTab>布局1</LayoutTab>
          <LayoutTab>布局2</LayoutTab>
          <NewTab aria-label="new layout"><Icon w={8}><path d="M4 0v8M0 4h8" stroke="#d0d0d0" strokeWidth="1.5" /></Icon></NewTab>
        </LayoutTabs>
        <StatusTray>
          <StatusCell $width={27} $sep>模型</StatusCell>
          {statusItems.map((s) => (
            <StatusCell key={s.id} $width={s.w} $sep={s.sep} aria-label={s.id}>
              {s.text || <Icon w={16}>{s.d}</Icon>}
            </StatusCell>
          ))}
        </StatusTray>
      </BottomBar>
    </Page>
  );
};

export default App;
